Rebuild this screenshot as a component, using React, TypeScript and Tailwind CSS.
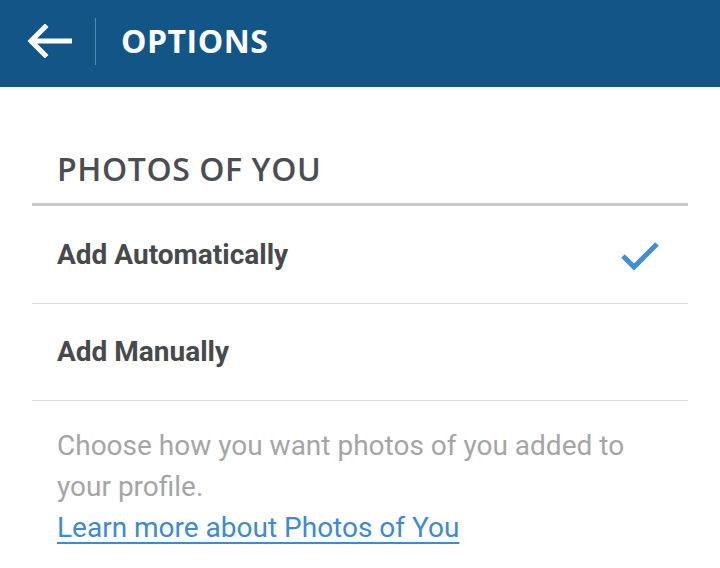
export default function App() {
  return (
    <div className="w-[720px] h-[568px] bg-white overflow-hidden">
      <div className="h-[87px] bg-[#125688] flex items-center pb-[5px]">
        <div className="w-[95px] flex items-center pl-[27px]">
          <svg width="45" height="34" viewBox="0 0 45 34" fill="none">
            <path d="M43 17H5M18 3L4 17l14 14" stroke="white" strokeWidth="5" strokeLinecap="square" />
          </svg>
        </div>
        <div className="w-px h-[47px] bg-white/30" />
        <h1 className="pl-[25px] text-white text-[32px] font-bold tracking-[0.5px] font-['Open_Sans',sans-serif] leading-none">
          OPTIONS
        </h1>
      </div>
      <div className="px-[32px]">
        <div className="h-[119px] flex items-end pb-[18px] pl-[25px] border-b-[3px] border-[#c9c9cc]">
          <h2 className="text-[32px] font-semibold text-[#4c4d52] font-['Open_Sans',sans-serif] leading-none tracking-[0.6px]">
            PHOTOS OF YOU
          </h2>
        </div>
        <div className="h-[98px] flex items-center justify-between pl-[25px] pr-[28px] border-b border-[#dbdbdb] font-['Roboto',sans-serif]">
          <span className="text-[28px] font-bold text-[#48494d]">Add Automatically</span>
          <svg width="40" height="30" viewBox="0 0 40 30" fill="none">
            <path d="M3 16l11 11L37 4" stroke="#3d8fd9" strokeWidth="5" />
          </svg>
        </div>
        <div className="h-[97px] flex items-center pl-[25px] border-b border-[#dbdbdb] font-['Roboto',sans-serif]">
          <span className="text-[28px] font-bold text-[#48494d]">Add Manually</span>
        </div>
        <div className="pl-[25px] pr-[40px] pt-[24px] font-['Roboto',sans-serif] text-[28px] leading-[41px]">
          <p className="text-[#a5a5a8]">Choose how you want photos of you added to your profile.</p>
          <a className="text-[#3f8ad0] underline underline-offset-[5px] decoration-[2px]">Learn more about Photos of You</a>
        </div>
      </div>
    </div>
  );
}
